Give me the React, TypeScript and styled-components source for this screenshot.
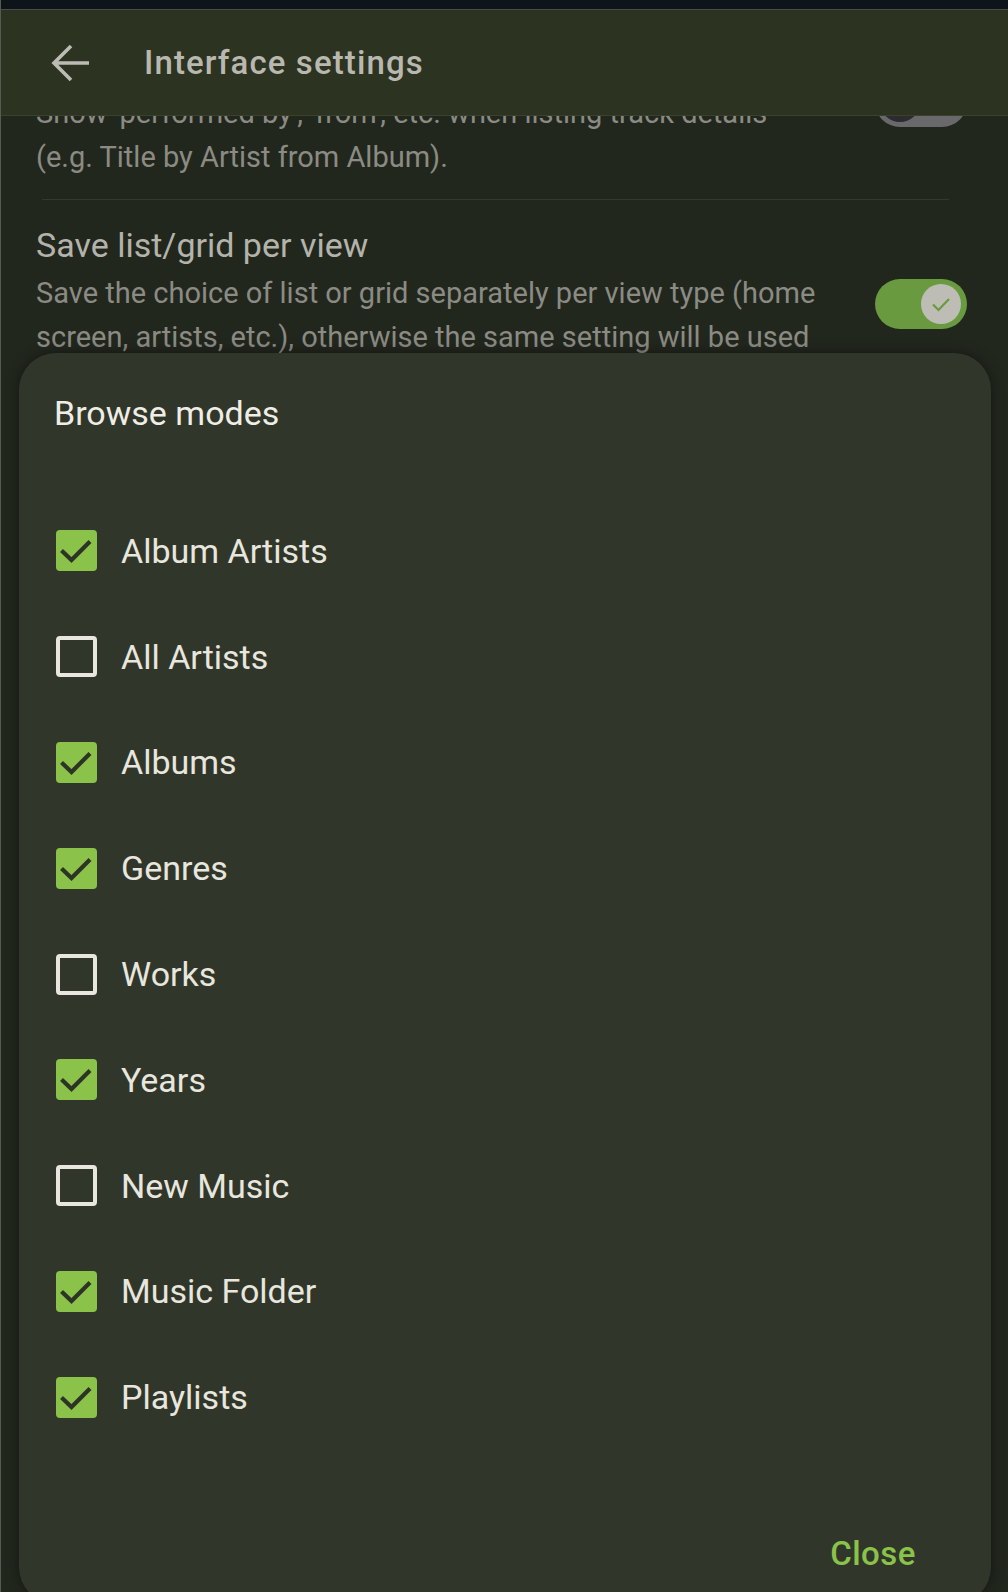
import React from "react";
import styled, { createGlobalStyle } from "styled-components";

const GlobalStyle = createGlobalStyle`
  *, *::before, *::after { box-sizing: border-box; }
  html, body { margin: 0; padding: 0; background: #22271e; }
  body { font-family: Roboto, "Noto Sans", "Liberation Sans", sans-serif; overflow: hidden; }
`;

const Screen = styled.div`
  position: relative;
  width: 1008px;
  height: 1592px;
  overflow: hidden;
  background: #22271e;
  border-left: 1px solid #555a52;
  display: flex;
  flex-direction: column;
`;

const StatusBar = styled.div`
  height: 10px;
  flex: 0 0 10px;
  background: #0f141b;
  border-bottom: 1px solid #474d54;
`;

const AppBar = styled.header`
  position: relative;
  z-index: 1;
  height: 106px;
  flex: 0 0 106px;
  background: #2c3321;
  border-bottom: 1px solid #3a422f;
  display: flex;
  align-items: center;
  padding-left: 50px;
  gap: 53px;
`;

const BackIcon = styled.svg`
  width: 40px;
  height: 38px;
  flex: 0 0 auto;
`;

const AppTitle = styled.h1`
  margin: 0;
  font-size: 33px;
  font-weight: 500;
  letter-spacing: 1.1px;
  color: #b9b8b0;
  line-height: 40px;
`;

const Scroller = styled.div`
  flex: 1;
  overflow: hidden;
`;

const ScrollContent = styled.div`
  margin-top: -96px;
`;

const SettingRow = styled.div`
  display: flex;
  align-items: center;
  gap: 50px;
  padding: 23px 41px 20px 35px;
`;

const SettingText = styled.div`
  flex: 1;
  min-width: 0;
  display: flex;
  flex-direction: column;
  gap: 4px;
`;

const SettingTitle = styled.div`
  font-size: 34px;
  line-height: 44px;
  color: #b3b3ab;
`;

const SettingDesc = styled.div`
  font-size: 29px;
  line-height: 44px;
  color: #8b8b84;
`;

const Divider = styled.hr`
  margin: 0 59px 0 41px;
  border: 0;
  height: 1px;
  background: #323a2c;
`;

const Track = styled.div<{ $on: boolean }>`
  flex: 0 0 92px;
  width: 92px;
  height: 50px;
  margin-bottom: 19px;
  border-radius: 25px;
  background: ${(p) => (p.$on ? "#6a9a40" : "#69696c")};
  display: flex;
  align-items: center;
  justify-content: ${(p) => (p.$on ? "flex-end" : "flex-start")};
  padding: 0 ${(p) => (p.$on ? "6px" : "5px")};
`;

const Thumb = styled.div<{ $on: boolean }>`
  width: 40px;
  height: 40px;
  border-radius: 50%;
  background: ${(p) => (p.$on ? "#bdbdb5" : "#2b2b30")};
  display: flex;
  align-items: center;
  justify-content: center;
`;

const Dialog = styled.div`
  position: absolute;
  left: 18px;
  top: 353px;
  width: 972px;
  height: 1251px;
  border-radius: 37px;
  background: #30372a;
  box-shadow: 0 0 14px rgba(0, 0, 0, 0.45);
  padding: 40px 75px 0 35px;
  display: flex;
  flex-direction: column;
  z-index: 2;
`;

const DialogTitle = styled.h2`
  margin: 0;
  font-size: 34px;
  font-weight: 400;
  line-height: 40px;
  color: #efede6;
`;

const OptionList = styled.div`
  margin-top: 65px;
  display: flex;
  flex-direction: column;
`;

const OptionRow = styled.label`
  height: 105.8px;
  display: flex;
  align-items: center;
  gap: 24px;
`;

const Box = styled.span<{ $checked: boolean }>`
  width: 41px;
  height: 41px;
  margin-left: 2px;
  flex: 0 0 41px;
  border-radius: 4px;
  background: ${(p) => (p.$checked ? "#8bc34a" : "transparent")};
  border: ${(p) => (p.$checked ? "none" : "4px solid #e8e6de")};
  display: flex;
  align-items: center;
  justify-content: center;
`;

const OptionLabel = styled.span`
  font-size: 34px;
  line-height: 40px;
  color: #e8e6de;
`;

const Actions = styled.div`
  margin-top: 84px;
  display: flex;
  justify-content: flex-end;
`;

const TextButton = styled.button`
  background: none;
  border: 0;
  padding: 0;
  font-family: inherit;
  font-size: 33px;
  font-weight: 500;
  letter-spacing: 0.5px;
  line-height: 40px;
  color: #8bc34a;
`;

const options: { label: string; checked: boolean }[] = [
  { label: "Album Artists", checked: true },
  { label: "All Artists", checked: false },
  { label: "Albums", checked: true },
  { label: "Genres", checked: true },
  { label: "Works", checked: false },
  { label: "Years", checked: true },
  { label: "New Music", checked: false },
  { label: "Music Folder", checked: true },
  { label: "Playlists", checked: true },
];

function Toggle({ on }: { on: boolean }) {
  return (
    <Track $on={on}>
      <Thumb $on={on}>
        {on && (
          <svg width="24" height="24" viewBox="0 0 24 24">
            <path d="M4 12.5 L9.5 18 L20 7" fill="none" stroke="#6a9a40" strokeWidth="2.2" />
          </svg>
        )}
      </Thumb>
    </Track>
  );
}

function CheckBox({ checked }: { checked: boolean }) {
  return (
    <Box $checked={checked}>
      {checked && (
        <svg width="41" height="41" viewBox="0 0 41 41">
          <path d="M5.5 20.5 L15.5 30 L34 11.5" fill="none" stroke="#2d3426" strokeWidth="4.2" />
        </svg>
      )}
    </Box>
  );
}

export default function App() {
  return (
    <>
      <GlobalStyle />
      <Screen>
        <StatusBar />
        <AppBar>
          <BackIcon viewBox="0 0 40 38">
            <path d="M3 19 H38 M20 2 L3 19 L20 36" fill="none" stroke="#bdbcb4" strokeWidth="3.6" />
          </BackIcon>
          <AppTitle>Interface settings</AppTitle>
        </AppBar>
        <Scroller>
          <ScrollContent>
            <SettingRow>
              <SettingText>
                <SettingTitle>Show track details</SettingTitle>
                <SettingDesc>
                  Show 'performed by', 'from', etc. when listing track details (e.g. Title by Artist
                  from Album).
                </SettingDesc>
              </SettingText>
              <Toggle on={false} />
            </SettingRow>
            <Divider />
            <SettingRow>
              <SettingText>
                <SettingTitle>Save list/grid per view</SettingTitle>
                <SettingDesc>
                  Save the choice of list or grid separately per view type (home screen, artists,
                  etc.), otherwise the same setting will be used for all views.
                </SettingDesc>
              </SettingText>
              <Toggle on={true} />
            </SettingRow>
          </ScrollContent>
        </Scroller>
        <Dialog>
          <DialogTitle>Browse modes</DialogTitle>
          <OptionList>
            {options.map((o) => (
              <OptionRow key={o.label}>
                <CheckBox checked={o.checked} />
                <OptionLabel>{o.label}</OptionLabel>
              </OptionRow>
            ))}
          </OptionList>
          <Actions>
            <TextButton>Close</TextButton>
          </Actions>
        </Dialog>
      </Screen>
    </>
  );
}
